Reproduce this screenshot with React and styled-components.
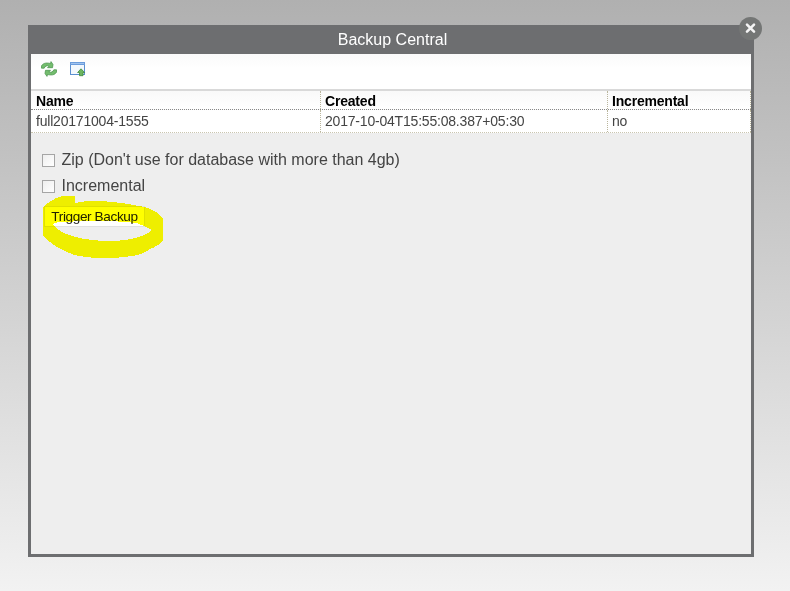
import React from 'react';
import styled, { createGlobalStyle } from 'styled-components';

const Global = createGlobalStyle`
  * { box-sizing: border-box; }
  html, body { margin: 0; height: 100%; }
  body { font-family: "Liberation Sans", Arial, sans-serif; overflow: hidden; color: #444; }
`;
const Page = styled.main`
  height: 591px;
  padding: 25px 36px 0 28px;
  background: linear-gradient(#b0b0b0, #f2f2f2);
`;
const Dialog = styled.section`
  position: relative;
  width: 726px;
  height: 532px;
  border: 3px solid #6d6e70;
  border-top: 0;
  border-radius: 0 12px 0 0;
  background: #eee;
`;
const TitleBar = styled.h1`
  margin: 0 -3px;
  height: 29px;
  border-radius: 0 12px 0 0;
  background: #6d6e70;
  color: #fff;
  font-size: 16px;
  font-weight: 400;
  line-height: 29px;
  text-align: center;
  padding-left: 3px;
`;
const CloseButton = styled.button`
  position: absolute;
  top: -8px;
  right: -11px;
  width: 23px;
  height: 23px;
  padding: 0;
  border: 0;
  border-radius: 50%;
  background: #747675;
  svg { display: block; }
`;
const Toolbar = styled.div`
  display: flex;
  align-items: flex-start;
  gap: 13px;
  height: 37px;
  padding: 7px 10px;
  background: linear-gradient(#fafafa, #fff 40%);
  border-bottom: 2px solid #d9d9d9;
  svg { display: block; }
`;
const Row = styled.div`
  display: grid;
  grid-template-columns: 290px 287px 143px;
  height: ${(p) => (p.$head ? 19 : 23)}px;
  background: ${(p) => (p.$head ? 'linear-gradient(#f9f9f9, #fff)' : '#fff')};
  border-bottom: 1px dotted ${(p) => (p.$head ? '#888' : '#c9c5b0')};
  color: ${(p) => (p.$head ? '#000' : '#444')};
  font-size: 14px;
  letter-spacing: -0.2px;
  font-weight: ${(p) => (p.$head ? 700 : 400)};
  line-height: ${(p) => (p.$head ? 20 : 22)}px;
`;
const Cell = styled.div`
  padding-left: 4px;
  border-right: 1px dotted #b9b59c;
  white-space: nowrap;
  &:first-child { padding-left: 5px; }
`;
const Options = styled.div`
  display: flex;
  flex-direction: column;
  align-items: flex-start;
  padding: 14px 11px;
`;
const Option = styled.label`
  display: flex;
  align-items: center;
  gap: 6.5px;
  height: 26px;
  font-size: 16px;
  white-space: nowrap;
`;
const Checkbox = styled.input`
  appearance: none;
  width: 13px;
  height: 13px;
  margin: 1px 0 0;
  border: 1px solid #a5a5a5;
  background: linear-gradient(135deg, #eee, #fff);
`;
const Trigger = styled.button`
  height: 21px;
  width: 101px;
  margin: 7px 0 0 2px;
  padding: 0;
  border: 1px solid #e0e0e0;
  background: #fff;
  color: #222;
  font: 13.6px "Liberation Sans", Arial, sans-serif;
  letter-spacing: -0.38px;
`;
const Marker = styled.svg`
  position: absolute;
  left: 9px;
  top: 168px;
  mix-blend-mode: multiply;
  pointer-events: none;
`;

const RefreshIcon = () => (
  <svg width="16" height="16" viewBox="0 0 16 16" fill="#74bd6e" stroke="#438f48" strokeWidth=".7" strokeLinejoin="round">
    <path d="M.5 7.200V4.800C2.500 1.800 5.500 1.600 9.500 2.500L10 .6 12 3.500 11.500 6.700H6.500L8.200 5C5.500 4.300 4 5.200 3.200 7.200Z" />
    <path d="M15.500 8.800V11.200C13.500 14.200 10.500 14.400 6.500 13.500L6 15.400 4 12.500 4.500 9.300H9.500L7.800 11C10.500 11.700 12 10.800 12.800 8.800Z" />
  </svg>
);

const WindowUpIcon = () => (
  <svg width="16" height="16" viewBox="0 0 16 16">
    <rect x=".5" y="1.500" width="14" height="12" fill="#f3f8fd" stroke="#5b8fd0" />
    <path d="M0 2.500h15" stroke="#6b9cdc" strokeWidth="3" />
    <path d="M1 2.500h13" stroke="#a0c3ee" strokeWidth="1" />
    <path d="M11 7.800l3.600 3.700H13V14.700H9.500V11.500H7.600Z" fill="#6db65f" stroke="#3d883d" strokeWidth=".8" />
  </svg>
);

export default function App() {
  return (
    <Page>
      <Global />
      <Dialog>
        <TitleBar>Backup Central</TitleBar>
        <Toolbar>
          <RefreshIcon />
          <WindowUpIcon />
        </Toolbar>
        <Row $head><Cell>Name</Cell><Cell>Created</Cell><Cell>Incremental</Cell></Row>
        <Row><Cell>full20171004-1555</Cell><Cell>2017-10-04T15:55:08.387+05:30</Cell><Cell>no</Cell></Row>
        <Options>
          <Option><Checkbox type="checkbox" />Zip (Don't use for database with more than 4gb)</Option>
          <Option><Checkbox type="checkbox" />Incremental</Option>
          <Trigger>Trigger Backup</Trigger>
        </Options>
        <Marker width="128" height="70" viewBox="40 193 128 70" shapeRendering="crispEdges">
          <path fill="#ff0" fillRule="evenodd" d="M62 196H75V203Q88 200 102 201L122 203L145 207Q157 211 163 218V241Q158 246 150 249Q142 255 132 256Q103 260 87 257Q75 256 67 252L57 247L47 240L43 236V208Q49 200 62 196ZM53 224Q55 222 66 222Q95 219 137 223L144 226L152 230Q146 235 136 238Q124 241 112 241Q90 241 76 237Q57 232 53 224Z" />
        </Marker>
        <CloseButton aria-label="Close">
          <svg width="23" height="23" viewBox="0 0 23 23"><path d="M8 7.700l7 7M15 7.700l-7 7" stroke="#f4f4f4" strokeWidth="2.600" strokeLinecap="round" /></svg>
        </CloseButton>
      </Dialog>
    </Page>
  );
}
